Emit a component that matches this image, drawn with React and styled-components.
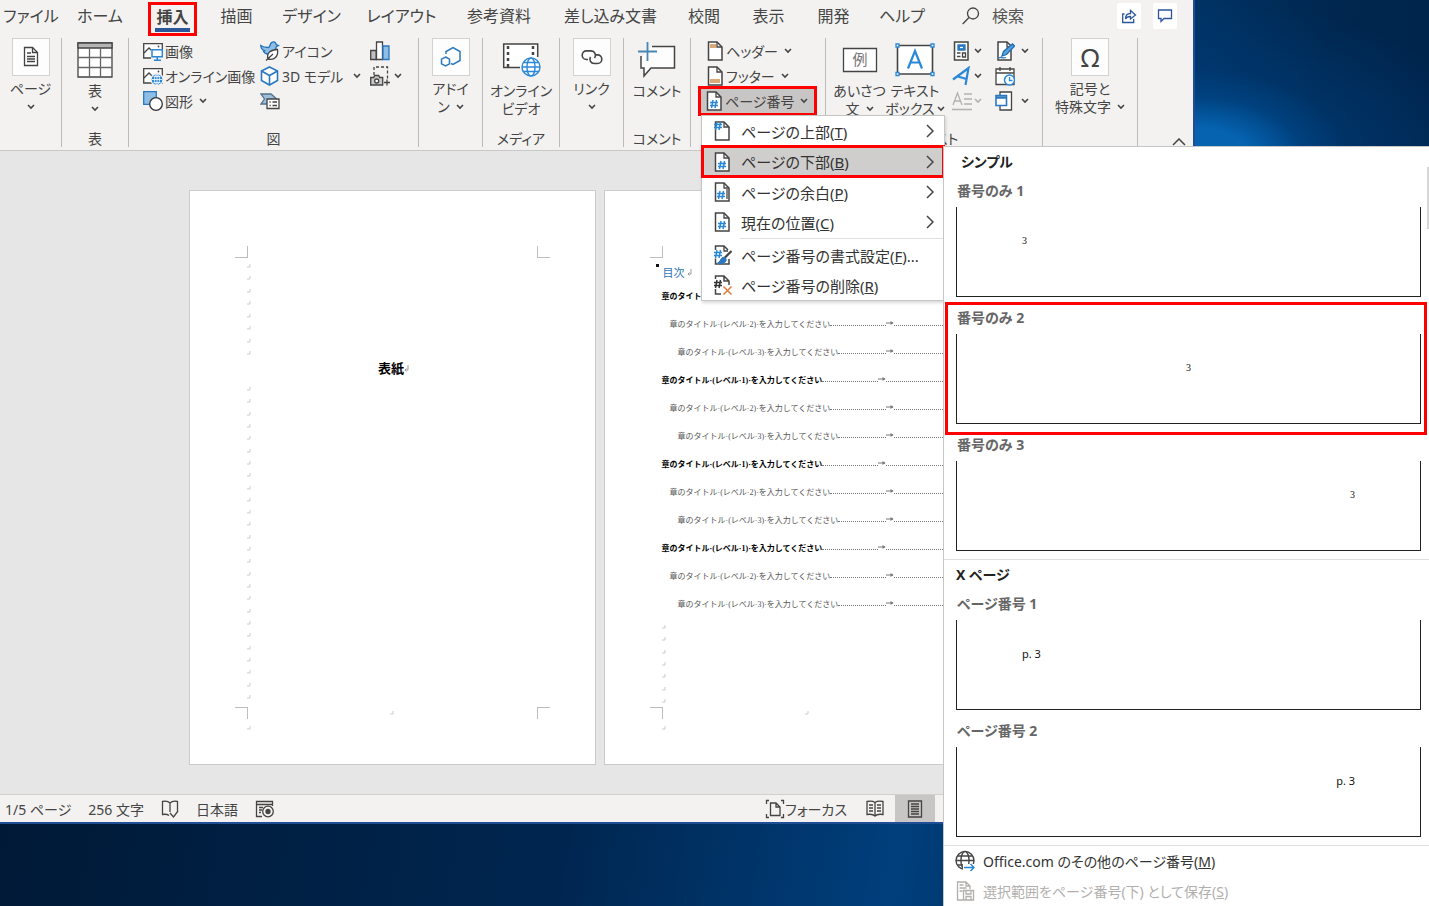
import styled, { createGlobalStyle, css } from "styled-components";

const GlobalStyle = createGlobalStyle`
  * {
    box-sizing: border-box;
  }
  body {
    margin: 0;
    font-family: "Noto Sans", "Noto Sans CJK JP", sans-serif;
    font-feature-settings: "palt";
    font-size: 14px;
    color: #444;
  }
  button,
  input {
    font: inherit;
    font-feature-settings: inherit;
    color: inherit;
    padding: 0;
    border: none;
    background: none;
  }
`;

/* ---------- desktop and window ---------- */

const Desktop = styled.div`
  position: relative;
  display: flex;
  height: 100vh;
  padding: 0 234px 82px 0;
  overflow: hidden;
  background:
    radial-gradient(ellipse 150px 90px at calc(100% - 230px) 160px, #0563b0 35%, rgba(0, 74, 140, 0.5) 70%, transparent),
    radial-gradient(ellipse 300px 170px at calc(100% - 230px) 170px, #004080, transparent),
    linear-gradient(100deg, #001630, #002650 45%, #003f7c 66%, #00274f 84%, #002148);
`;
const Window = styled.div`
  flex: 1;
  min-width: 0;
  display: flex;
  flex-direction: column;
  background-color: #f3f2f1;
  border-right: 2px solid #1f4e94;
  border-bottom: 2px solid #1f4e94;
`;

/* ---------- tabs ---------- */

const TabBar = styled.nav`
  display: flex;
  height: 34px;
`;
const Tab = styled.button`
  width: ${(props) => props.$width}px;
  height: 32px;
  font-size: 16px;
  line-height: 24px;
  white-space: nowrap;
`;
const ActiveTab = styled.button`
  width: 49px;
  height: 34px;
  margin: 2px 7px 0 10px;
  padding: 0 4px;
  border: 3px solid #f00;
  font-size: 16px;
  font-weight: 700;
  line-height: 22px;
  white-space: nowrap;
`;
const TabUnderline = styled.span`
  display: block;
  height: 4px;
  background-color: #2b579a;
`;
const Search = styled.label`
  display: flex;
  align-items: center;
  gap: 12px;
  margin-left: 24px;
  height: 32px;
`;
const SearchInput = styled.input`
  width: 90px;
  font-size: 16px;
  outline: none;
  &::placeholder {
    color: #555;
  }
`;
const WindowActions = styled.div`
  display: flex;
  gap: 12px;
  margin: 3px 16px 0 auto;
`;
const ActionButton = styled.button`
  display: flex;
  align-items: center;
  justify-content: center;
  width: 24px;
  height: 26px;
  background-color: #fff;
  border-radius: 2px;
`;

/* ---------- ribbon ---------- */

const Ribbon = styled.div`
  display: flex;
  height: 117px;
  padding-top: 4px;
  border-bottom: 1px solid #c8c8c8;
`;
const Group = styled.section`
  display: flex;
  flex-direction: column;
  flex: none;
  width: ${(props) => props.$width}px;
  height: 109px;
  border-right: 1px solid #bdbbb9;
`;
const GroupBody = styled.div`
  display: flex;
  flex: 1;
  justify-content: ${(props) => (props.$start ? "flex-start" : "center")};
  padding-left: ${(props) => props.$start || 0}px;
`;
const GroupLabel = styled.div`
  height: 16px;
  line-height: 16px;
  text-align: center;
  white-space: nowrap;
`;
const BigButton = styled.button`
  display: flex;
  flex-direction: column;
  align-items: center;
  justify-content: flex-start;
  height: 84px;
  line-height: 18px;
  white-space: nowrap;
`;
const IconTile = styled.span`
  display: flex;
  align-items: center;
  justify-content: center;
  width: 38px;
  height: 38px;
  margin-bottom: 4px;
  border: 1px solid #d4d2d0;
  background-color: #fdfdfd;
  font-size: 26px;
`;
const LargeIcon = styled.span`
  display: flex;
  align-items: center;
  justify-content: center;
  height: 44px;
`;
const Column = styled.div`
  display: flex;
  flex-direction: column;
  width: ${(props) => props.$width}px;
  padding-left: ${(props) => props.$pad || 0}px;
`;
const SmallButton = styled.button`
  display: flex;
  align-items: center;
  gap: 2px;
  height: 25px;
  white-space: nowrap;
`;
const ChevronBox = styled.span`
  display: inline-flex;
  align-items: center;
  justify-content: center;
  width: 8px;
  height: 18px;
  margin-left: ${(props) => props.$gap || 0}px;
  vertical-align: top;
`;
const Collapse = styled.button`
  align-self: flex-end;
  height: 16px;
  margin: 0 7px 3px auto;
`;
const PageNumberWrap = styled.div`
  position: relative;
`;
const PageNumberButton = styled(SmallButton)`
  height: 30px;
  margin: -2px 0 0 -8px;
  padding: 0 6px 0 4px;
  border: 3px solid #f00;
  background-color: #c8c6c4;
`;

/* ---------- page number menu ---------- */

const Menu = styled.div`
  position: absolute;
  z-index: 3;
  top: 27px;
  left: -5px;
  width: 244px;
  border: 1px solid #c6c6c6;
  background-color: #fff;
  box-shadow: 1px 2px 3px rgba(0, 0, 0, 0.15);
`;
const MenuItem = styled.button`
  display: flex;
  align-items: center;
  gap: 8px;
  width: 100%;
  height: 30px;
  padding: 0 10px 0 11px;
  font-size: 15px;
  color: #333;
  white-space: nowrap;
  text-align: left;
  ${(props) =>
    props.$active &&
    css`
      position: relative;
      height: 31px;
      background-color: #d0cecd;
      outline: 3px solid #f00;
      outline-offset: -2px;
    `}
`;
const MenuIcon = styled.span`
  display: flex;
  width: 20px;
`;
const MenuText = styled.span`
  flex: 1;
`;
const MenuDivider = styled.hr`
  height: 1px;
  margin: 1px 0 1px 38px;
  border: none;
  background-color: #e1dfdd;
`;

/* ---------- document ---------- */

const Workspace = styled.main`
  flex: 1;
  min-height: 0;
  display: flex;
  justify-content: center;
  align-items: flex-start;
  gap: 8px;
  padding: 39px 0 0 6px;
  overflow: hidden;
  background-color: #e6e6e6;
`;
const Page = styled.article`
  display: flex;
  flex-direction: column;
  flex: none;
  width: 407px;
  height: 575px;
  padding: 55px 45px 27px;
  border: 1px solid #cbcbcb;
  background-color: #fff;
  font-family: "Liberation Serif", "Noto Sans CJK JP", serif;
  font-feature-settings: normal;
  color: #222;
`;
const MarkRow = styled.div`
  display: flex;
  justify-content: space-between;
  align-items: center;
  height: 12px;
`;
const CropMark = styled.span`
  width: 13px;
  height: 12px;
  border: 0 solid #bdbdbd;
  border-${(props) => props.$v}-width: 1px;
  border-${(props) => props.$h}-width: 1px;
`;
const PageBody = styled.div`
  flex: 1;
  min-height: 0;
  padding: 6px 0 0 12px;
`;
const PageEnd = styled.div`
  display: flex;
  align-items: center;
  height: 18px;
  padding-left: 12px;
`;
const Marks = styled.div`
  display: flex;
  flex-direction: column;
  justify-content: space-between;
  height: ${(props) => props.$height}px;
`;
const CoverTitle = styled.h1`
  margin: 0 9px 0 0;
  height: 32px;
  font-size: 13px;
  font-weight: 700;
  line-height: 28px;
  text-align: center;
  color: #000;
`;
const TocTitle = styled.h2`
  display: flex;
  align-items: center;
  gap: 2px;
  margin: 0 0 0 -6px;
  height: 17px;
  font-size: 11px;
  font-weight: 400;
  line-height: 16px;
  color: #2e74b5;
`;
const Bullet = styled.span`
  align-self: flex-start;
  width: 3px;
  height: 3px;
  margin: 0 2px 0 0;
  background-color: #111;
`;
const TocRow = styled.div`
  display: flex;
  align-items: center;
  height: 28px;
  padding-left: ${(props) => (props.$level - 1) * 8}px;
  font-size: 8px;
  font-weight: ${(props) => (props.$level === 1 ? 700 : 400)};
  color: ${(props) => (props.$level === 1 ? "#000" : "#555")};
  white-space: nowrap;
`;
const Leader = styled.span`
  width: ${(props) => props.$width || "auto"};
  flex: ${(props) => (props.$width ? "none" : 1)};
  height: 5px;
  border-bottom: 1px dotted #777;
`;
const TocMarks = styled.div`
  padding-top: 8px;
`;

/* ---------- status bar ---------- */

const StatusBar = styled.footer`
  display: flex;
  align-items: center;
  height: 28px;
  padding: 0 258px 0 5px;
  border-top: 1px solid #d2d0ce;
  white-space: nowrap;
`;
const StatusButton = styled.button`
  display: flex;
  align-items: center;
  margin-right: ${(props) => (props.$tight ? 8 : 17)}px;
`;
const Spacer = styled.span`
  flex: 1;
`;
const ViewButton = styled.button`
  display: flex;
  align-items: center;
  justify-content: center;
  width: 40px;
  height: 27px;
  background-color: ${(props) => (props.$active ? "#c8c6c4" : "transparent")};
`;

/* ---------- gallery ---------- */

const Gallery = styled.aside`
  position: absolute;
  z-index: 4;
  top: 146px;
  right: 0;
  bottom: 0;
  width: 486px;
  border: 1px solid #c6c6c6;
  border-width: 1px 0 0 1px;
  background-color: #fff;
  font-size: 14px;
  overflow: hidden;
`;
const GallerySection = styled.section`
  padding: 0 3px 2px 2px;
  border-bottom: 1px solid #e1dfdd;
`;
const GalleryHeading = styled.h3`
  margin: 0;
  padding-left: ${(props) => (props.$indent ? 15 : 10)}px;
  height: 29px;
  font-size: 14px;
  font-weight: 700;
  line-height: 30px;
  color: #222;
`;
const GalleryItem = styled.button`
  display: flex;
  flex-direction: column;
  align-items: stretch;
  justify-content: flex-start;
  width: 100%;
  height: 127px;
  padding: 2px 5px 0 10px;
  text-align: left;
  ${(props) =>
    props.$active &&
    css`
      position: relative;
      height: 131px;
      margin-bottom: -4px;
      outline: 3px solid #f00;
      outline-offset: -2px;
    `}
`;
const ItemName = styled.span`
  height: 29px;
  padding-left: 1px;
  font-size: 14px;
  font-weight: 700;
  line-height: 25px;
  color: #666;
`;
const Preview = styled.span`
  display: flex;
  justify-content: ${(props) => props.$align};
  height: 90px;
  padding: 24px 65px;
  border: 1px solid #222;
  border-top: none;
  font-family: ${(props) => (props.$sans ? "inherit" : '"Liberation Serif", serif')};
  font-size: ${(props) => (props.$sans ? 11 : 10)}px;
  line-height: 20px;
  color: #111;
`;
const FooterItem = styled.button`
  display: flex;
  align-items: center;
  gap: 8px;
  height: 30px;
  padding-left: 11px;
  white-space: nowrap;
  color: #333;
  &:disabled {
    color: #b1afad;
  }
`;
const ScrollThumb = styled.span`
  position: absolute;
  top: 20px;
  right: 0;
  width: 2px;
  height: 62px;
  background-color: #d6d6d6;
`;

/* ---------- icons ---------- */

const Svg = ({ w = 20, h = w, box, children }) => (
  <svg width={w} height={h} viewBox={box || `0 0 ${w} ${h}`} fill="none" stroke="#444" strokeWidth="1.3" aria-hidden="true">
    {children}
  </svg>
);

const Chevron = ({ gap, color = "#444" }) => (
  <ChevronBox $gap={gap}>
    <Svg w={8} h={6}>
      <path d="M1 1l3 3 3-3" stroke={color} strokeWidth="1.6" />
    </Svg>
  </ChevronBox>
);

const hash = "M3 0L1.500 8M6.500 0L5 8M0 2.500h8M0 5.500h8";
const sheet = "M2.500 1h8.500l5 5v13H2.500z";

const Sheet = ({ children }) => (
  <Svg w={18} h={20}>
    <path d={sheet} fill="#fff" strokeWidth="1.500" />
    <path d="M11 1v5h5" />
    {children}
  </Svg>
);
const Hash = ({ x, y, color = "#2b88d8" }) => (
  <path d={hash} transform={`translate(${x} ${y})`} stroke={color} strokeWidth="1.500" />
);
const Globe = ({ cx, cy, r, color = "#2b88d8" }) => (
  <g stroke={color} fill="#fff" strokeWidth="1.400">
    <circle cx={cx} cy={cy} r={r} />
    <ellipse cx={cx} cy={cy} rx={r * 0.45} ry={r} />
    <path d={`M${cx - r} ${cy}h${r * 2}M${cx - r * 0.85} ${cy - r / 2}h${r * 1.7}M${cx - r * 0.85} ${cy + r / 2}h${r * 1.7}`} />
  </g>
);

const PageIcon = () => (
  <Svg w={18} h={22}>
    <path d="M2.500 1.500h8l5 5v13h-13z" fill="#fff" />
    <path d="M10.500 1.500v5h5M5 7h4M5 10.500h8M5 13h8M5 15.500h8" />
  </Svg>
);
const TableIcon = () => (
  <Svg w={36} h={36}>
    <path d="M1 1h34v34H1z" fill="#fff" />
    <path d="M1 1h34v5H1z" fill="#b5b5b5" />
    <path d="M1 15.500h34M1 25.500h34M12.500 6v29M23.500 6v29" stroke="#666" />
  </Svg>
);
const ImageIcon = ({ online }) => (
  <Svg>
    <path d="M.7 17V2.700h18.600V17z" fill="#fff" />
    <path d="M1 12l5-5 5 5" />
    <circle cx="15.500" cy="5.500" r=".9" fill="#444" stroke="none" />
    {online ? (
      <>
        <circle cx="14" cy="13.500" r="6" fill="#2b88d8" stroke="#f3f2f1" />
        <path d="M9 13.500h10M14 8.500v10M10.500 10.500h7M10.500 16.500h7" stroke="#fff" strokeWidth=".8" />
        <ellipse cx="14" cy="13.500" rx="2.500" ry="5" stroke="#fff" strokeWidth=".8" />
      </>
    ) : (
      <g stroke="#2b88d8" strokeWidth="1.500">
        <path d="M8 8v11h12V8z" fill="#f3f2f1" stroke="none" />
        <path d="M9 8.700h10.300v7H9z" fill="#fff" />
        <path d="M14.300 16v3M11 19.200h7" />
      </g>
    )}
  </Svg>
);
const ShapesIcon = () => (
  <Svg>
    <path d="M.7.7h12.600v12.600H.7z" fill="#8ebde6" stroke="#2b78c0" />
    <circle cx="13" cy="13" r="6.300" fill="#fff" stroke="#333" />
  </Svg>
);
const IconsIcon = () => (
  <Svg>
    <path d="M.7 4.500c2 1.500 4.500 2 7.800 2C10.500 6 9.500 3 11.500 1.500c2.500-1.500 4.500 0 4.700 2l2.300 1-2.300 1.300C16 11.500 11 14 7 13c-2-.5-3-1.500-3.500-2.500l1-.8C2 9 1 7 .7 4.500z" fill="#8ebde6" stroke="#2072b8" />
    <path d="M8 18c-1.500-5 1-9 9.500-9.500C18.500 15 15 19.500 8 18zM6 19.500l7-6.500" fill="#fff" />
  </Svg>
);
const CubeIcon = () => (
  <Svg>
    <path d="M9.500 1l8 4v9.500l-8 4.500-8-4.500V5z" fill="#fff" stroke="#2b78c0" strokeWidth="1.600" />
    <path d="M1.500 5l8 4.500 8-4.500M9.500 9.500V19" stroke="#2b78c0" strokeWidth="1.600" />
  </Svg>
);
const SmartArtIcon = () => (
  <Svg>
    <path d="M1 3h10l5 4.500-3 5.500H1L4.500 8z" fill="#9cc0dc" stroke="#55708a" />
    <path d="M7 8h12v9.500H7z" fill="#fff" />
    <path d="M9.500 11h1.200M12.500 11h4.500M9.500 14.500h1.200M12.500 14.500h4.500" />
  </Svg>
);
const ChartIcon = () => (
  <Svg>
    <path d="M.7 9.500h5.500v9H.7z" fill="#c0c0c0" />
    <path d="M6.500 1h6v17.500h-6z" fill="#fff" />
    <path d="M13 5h6v13.500h-6z" fill="#8ebde6" stroke="#2b78c0" />
  </Svg>
);
const ScreenshotIcon = () => (
  <Svg>
    <path d="M4 9V1h13.500v12" strokeDasharray="3 2" />
    <path d="M.7 11.500h3l1-2h4l1 2h3v7.500H.7z" fill="#c8c8c8" />
    <circle cx="6.700" cy="15" r="2" fill="#fff" />
    <path d="M14 16.500h6M17 13.500v6" />
  </Svg>
);
const AddinIcon = () => (
  <Svg w={22} h={22}>
    <path d="M6 8V5.500L13 1.500l7 4v9l-7 4-2-1" stroke="#2b78c0" strokeWidth="1.500" />
    <path d="M5.500 11l4 2.200v4.600l-4 2.200-4-2.200v-4.600z" stroke="#2b78c0" strokeWidth="1.500" />
  </Svg>
);
const VideoIcon = () => (
  <Svg w={40} h={36}>
    <path d="M19 25.500H2.700V2h34v13" strokeWidth="1.500" fill="#fff" />
    <path d="M7 4v21M32 4v10" strokeWidth="2.500" strokeDasharray="3 3" />
    <Globe cx={30} cy={25} r={9} />
  </Svg>
);
const LinkIcon = () => (
  <Svg w={22} h={16}>
    <path d="M7 10.500H5.500a4.300 4.300 0 010-8.600h4.500a4.300 4.300 0 013.500 7M9.500 8a4.300 4.300 0 004 6.500h3a4.300 4.300 0 000-8.600H15" strokeWidth="1.600" />
  </Svg>
);
const CommentIcon = () => (
  <Svg w={38} h={36}>
    <path d="M3 16v10h3v8l7-8h23.500V4.500H14L9.500 9.500z" fill="#fdfdfd" stroke="none" />
    <path d="M3 14v12h3v8l7-8h23.500V4.500H14" strokeWidth="1.500" />
    <path d="M9.500 0v19M0 9.500h19" stroke="#4a86b4" strokeWidth="1.800" />
  </Svg>
);
const GreetingIcon = () => (
  <Svg w={36} h={26}>
    <path d="M1.500 1.500h33v23h-33z" fill="#fff" />
    <text x="18" y="18" textAnchor="middle" fontSize="15" fill="#777" stroke="none">例</text>
  </Svg>
);
const TextBoxIcon = () => (
  <Svg w={40} h={34}>
    <path d="M2.500 2.500h35v28.500h-35z" fill="#fff" strokeWidth="1.600" />
    <path d="M1 1h3v3H1zM36 1h3v3h-3zM1 29.500h3v3H1zM36 29.500h3v3h-3z" fill="#fff" stroke="#2b88d8" />
    <path d="M13 25.500L20 8l7 17.500M15.500 19.500h9" stroke="#2b88d8" strokeWidth="2.200" />
  </Svg>
);
const QuickPartsIcon = () => (
  <Svg>
    <path d="M2.500 1h13.500v18H2.500z" fill="#fff" strokeWidth="1.500" />
    <path d="M6 4h7v5H6z" fill="#2b78c0" stroke="#2b78c0" />
    <path d="M8 6.500h3" stroke="#fff" />
    <path d="M5 12h3.500M5 15.500h3.500M10.500 12h3v4h-3z" />
  </Svg>
);
const WordArtIcon = () => (
  <Svg>
    <path d="M1 13.500L16.500 2l-3 17M6 10.500l8.500 2.500" stroke="#2b88d8" strokeWidth="2.200" />
  </Svg>
);
const DropCapIcon = () => (
  <Svg>
    <g stroke="#b3b1af">
      <path d="M1 14L5.500 2 10 14M2.500 10h6M12 3h8M12 8h8M12 13h8M0 18.500h20" />
    </g>
  </Svg>
);
const SignatureIcon = () => (
  <Svg>
    <path d="M3 1h9l4 4v14H3z" fill="#fff" strokeWidth="1.500" />
    <path d="M12 1v5h4" />
    <path d="M7 15l1.500-4.500 9-7.500 2 2-8 8.500z" fill="#5ba3dc" stroke="#1f6cb0" />
    <path d="M4 17c2-2 3 1 7-.5" stroke="#2b78c0" />
  </Svg>
);
const DateIcon = () => (
  <Svg>
    <path d="M1 3h18v15.500H1z" fill="#fff" />
    <path d="M1 7h18M5 1v4M15 1v4" />
    <circle cx="14.500" cy="14" r="5" fill="#fff" stroke="#2b88d8" strokeWidth="1.500" />
    <path d="M14.500 11v3.500h3" stroke="#2b88d8" />
  </Svg>
);
const ObjectIcon = () => (
  <Svg>
    <path d="M5 4V1h11.500v18H5v-4" fill="#fff" />
    <path d="M1 4.500h10.500v10H1z" fill="#fff" stroke="#2b78c0" strokeWidth="1.600" />
    <path d="M1 6.500h10.500" stroke="#2b78c0" strokeWidth="2.500" />
  </Svg>
);
const SearchIcon = () => (
  <Svg w={18} h={18}>
    <circle cx="11" cy="6.500" r="5.500" />
    <path d="M7 10.500L.7 17" />
  </Svg>
);
const ShareIcon = () => (
  <Svg w={16} h={16}>
    <g stroke="#2b579a">
      <path d="M3.500 6H1.700v8.500h11V11" />
      <path d="M4.500 11c0-4 2-5.500 5-5.500V2.500l5 4.500-5 4V8.500c-2 0-4 .5-5 2.500z" />
    </g>
  </Svg>
);
const NoteIcon = () => (
  <Svg w={16} h={16}>
    <path d="M1.500 2h13v8.500H7L4 13.500v-3H1.500z" stroke="#2b579a" />
  </Svg>
);
const ArrowIcon = () => (
  <Svg w={8} h={14}>
    <path d="M1 1l6 6-6 6" strokeWidth="1.500" />
  </Svg>
);
const BrushSheet = () => (
  <Svg w={20} h={20}>
    <path d="M2.500 13.500V19H16v-5M2.500 5V1H11l4 4" strokeWidth="1.500" />
    <path d="M11 1v5h4" />
    <Hash x={1} y={5} />
    <path d="M18.500 6L11 13.500" strokeWidth="2.200" />
    <path d="M10 12.500c2 0 3 1 3 3-2 3-5 3.500-8 2.500 3-1 2-4 5-5.500z" fill="#2b78c0" stroke="#2b78c0" />
  </Svg>
);
const RemoveSheet = () => (
  <Svg w={20} h={20}>
    <path d="M2.500 14v5H8M2.500 4V1H11l5 5v4M11 1v5h5" strokeWidth="1.500" />
    <Hash x={1} y={5} color="#333" />
    <path d="M10.500 11.500l8 8M18.500 11.500l-8 8" stroke="#e07b39" strokeWidth="1.500" />
  </Svg>
);
const ProofIcon = () => (
  <Svg w={18} h={18}>
    <path d="M9 3C7 1 4 1 1.500 1.500v13C4 14 6 14 8 15.500M9 3c2-2 5-2 7.500-1.500V11M9 3v9M9 13l3.500 4L17 11" />
  </Svg>
);
const MacroIcon = () => (
  <Svg w={20} h={18}>
    <path d="M7 16.500H1.500v-15h16V6M1.500 4.500h16M4 7.500h4M4 10h3M4 12.500h2" />
    <circle cx="13" cy="11.500" r="5.300" />
    <circle cx="13" cy="11.500" r="2" fill="#444" />
  </Svg>
);
const FocusIcon = () => (
  <Svg w={20} h={20}>
    <path d="M4 1.500H1.500V5M16 1.500h2.500V5M4 18.500H1.500V15M16 18.500h2.500V15M5.500 4h5.500l4 4v8.500H5.500zM11 4v4h4" />
  </Svg>
);
const BookIcon = () => (
  <Svg w={18} h={18}>
    <path d="M9 2.500C7 1 4 1 1 1.500v13c3-.5 6-.5 8 1.500 2-2 5-2 8-1.500v-13c-3-.5-6-.5-8 1zM9 2.500V16M3 5h4M3 8h4M3 11h4M11 5h4M11 8h4M11 11h4" />
  </Svg>
);
const LayoutIcon = () => (
  <Svg w={16} h={18}>
    <path d="M1.500 1h13v16h-13zM4 4h8M4 6.500h8M4 9h8M4 11.500h8M4 14h8" />
  </Svg>
);
const OfficeIcon = () => (
  <Svg w={20} h={22}>
    <Globe cx={10} cy={10.5} r={9} color="#444" />
    <path d="M8 14h12v8H8z" fill="#fff" stroke="none" />
    <path d="M9 17.500h10M15.500 14l3.500 3.500-3.500 3.500" stroke="#2b88d8" strokeWidth="1.500" />
  </Svg>
);
const SaveSheet = () => (
  <Svg w={20} h={20}>
    <g stroke="#b1afad">
      <path d="M8 19H2.500V1H11l4 4v3M11 1v4h4M4.500 4h4M4.500 7h7M4.500 10h3" />
      <path d="M8.500 9.500h10v9.500h-10zM11 9.500v3.500h5V9.500M11 19v-3.500h5V19" />
    </g>
  </Svg>
);
const TabArrow = () => (
  <Svg w={8} h={6}>
    <path d="M0 3h7" stroke="#777" strokeWidth="1" />
    <path d="M4.500 1l3 2-3 2z" fill="#777" stroke="none" />
  </Svg>
);

/* ---------- data ---------- */

const leftTabs = [
  ["ファイル", 62],
  ["ホーム", 76],
];
const rightTabs = [
  ["描画", 65],
  ["デザイン", 85],
  ["レイアウト", 95],
  ["参考資料", 100],
  ["差し込み文書", 123],
  ["校閲", 64],
  ["表示", 65],
  ["開発", 65],
  ["ヘルプ", 72],
];

const tocLevels = [1, 2, 3, 1, 2, 3, 1, 2, 3, 1, 2, 3];

const menuItems = [
  { icon: <Sheet><Hash x={1} y={1} /></Sheet>, text: "ページの上部", hotkey: "T" },
  { icon: <Sheet><Hash x={5} y={9} /></Sheet>, text: "ページの下部", hotkey: "B", active: true },
  { icon: <Sheet><Hash x={4} y={9} /><path d="M14 7v10" /></Sheet>, text: "ページの余白", hotkey: "P" },
  { icon: <Sheet><Hash x={5} y={9} /></Sheet>, text: "現在の位置", hotkey: "C" },
];

const sections = [
  {
    title: "シンプル",
    indent: true,
    items: [
      { name: "番号のみ 1", align: "flex-start", text: "3" },
      { name: "番号のみ 2", align: "center", text: "3", active: true },
      { name: "番号のみ 3", align: "flex-end", text: "3" },
    ],
  },
  {
    title: "X ページ",
    items: [
      { name: "ページ番号 1", align: "flex-start", text: "p. 3", sans: true },
      { name: "ページ番号 2", align: "flex-end", text: "p. 3", sans: true },
    ],
  },
];

/* ---------- parts ---------- */

const ParagraphMark = () => (
  <Svg w={4} h={4}>
    <path d="M3 0v3H0" stroke="#ccc" strokeWidth="1" />
  </Svg>
);

const ParagraphMarks = ({ count, height }) => (
  <Marks $height={height}>
    {Array.from({ length: count }, (_, i) => (
      <ParagraphMark key={i} />
    ))}
  </Marks>
);

const ReturnMark = () => (
  <Svg w={5} h={8}>
    <path d="M4 0v5H1M2.500 3.500L1 5l1.500 1.500" stroke="#888" strokeWidth=".8" />
  </Svg>
);

const PageNumberMenu = () => (
  <Menu>
    {menuItems.map((item) => (
      <MenuItem key={item.hotkey} $active={item.active}>
        <MenuIcon>{item.icon}</MenuIcon>
        <MenuText>
          {item.text}(<u>{item.hotkey}</u>)
        </MenuText>
        <ArrowIcon />
      </MenuItem>
    ))}
    <MenuDivider />
    <MenuItem>
      <MenuIcon><BrushSheet /></MenuIcon>
      <MenuText>
        ページ番号の書式設定(<u>F</u>)...
      </MenuText>
    </MenuItem>
    <MenuItem>
      <MenuIcon><RemoveSheet /></MenuIcon>
      <MenuText>
        ページ番号の削除(<u>R</u>)
      </MenuText>
    </MenuItem>
  </Menu>
);

const InsertRibbon = () => (
  <Ribbon>
    <Group $width={62}>
      <GroupBody>
        <BigButton>
          <IconTile><PageIcon /></IconTile>
          ページ
          <Chevron />
        </BigButton>
      </GroupBody>
    </Group>
    <Group $width={67}>
      <GroupBody>
        <BigButton>
          <LargeIcon><TableIcon /></LargeIcon>
          表
          <Chevron />
        </BigButton>
      </GroupBody>
      <GroupLabel>表</GroupLabel>
    </Group>
    <Group $width={290}>
      <GroupBody $start={14}>
        <Column $width={117}>
          <SmallButton><ImageIcon />画像</SmallButton>
          <SmallButton><ImageIcon online />オンライン画像</SmallButton>
          <SmallButton><ShapesIcon />図形<Chevron gap={4} /></SmallButton>
        </Column>
        <Column $width={110}>
          <SmallButton><IconsIcon />アイコン</SmallButton>
          <SmallButton><CubeIcon />3D モデル<Chevron gap={8} /></SmallButton>
          <SmallButton aria-label="SmartArt"><SmartArtIcon /></SmallButton>
        </Column>
        <Column $width={40}>
          <SmallButton aria-label="グラフ"><ChartIcon /></SmallButton>
          <SmallButton aria-label="スクリーンショット"><ScreenshotIcon /><Chevron gap={2} /></SmallButton>
        </Column>
      </GroupBody>
      <GroupLabel>図</GroupLabel>
    </Group>
    <Group $width={64}>
      <GroupBody>
        <BigButton>
          <IconTile><AddinIcon /></IconTile>
          アドイ
          <span>ン<Chevron gap={6} /></span>
        </BigButton>
      </GroupBody>
    </Group>
    <Group $width={77}>
      <GroupBody>
        <BigButton>
          <LargeIcon><VideoIcon /></LargeIcon>
          <span>オンライン</span>
          <span>ビデオ</span>
        </BigButton>
      </GroupBody>
      <GroupLabel>メディア</GroupLabel>
    </Group>
    <Group $width={64}>
      <GroupBody>
        <BigButton>
          <IconTile><LinkIcon /></IconTile>
          リンク
          <Chevron />
        </BigButton>
      </GroupBody>
    </Group>
    <Group $width={67}>
      <GroupBody>
        <BigButton>
          <LargeIcon><CommentIcon /></LargeIcon>
          コメント
        </BigButton>
      </GroupBody>
      <GroupLabel>コメント</GroupLabel>
    </Group>
    <Group $width={135}>
      <GroupBody $start={15}>
        <Column $width={118}>
          <SmallButton>
            <Sheet><path d="M4 3h6v4H4z" fill="#dba878" stroke="none" /></Sheet>
            ヘッダー<Chevron gap={4} />
          </SmallButton>
          <SmallButton>
            <Sheet><path d="M4 13h10v4H4z" fill="#dba878" stroke="none" /></Sheet>
            フッター<Chevron gap={4} />
          </SmallButton>
          <PageNumberWrap>
            <PageNumberButton>
              <Sheet><Hash x={5} y={9} /></Sheet>
              ページ番号<Chevron gap={4} />
            </PageNumberButton>
            <PageNumberMenu />
          </PageNumberWrap>
        </Column>
      </GroupBody>
    </Group>
    <Group $width={217}>
      <GroupBody $start={6}>
        <Column $width={55}>
          <BigButton>
            <LargeIcon><GreetingIcon /></LargeIcon>
            <span>あいさつ</span>
            <span>文<Chevron gap={6} /></span>
          </BigButton>
        </Column>
        <Column $width={56}>
          <BigButton>
            <LargeIcon><TextBoxIcon /></LargeIcon>
            <span>テキスト</span>
            <span>ボックス<Chevron gap={2} /></span>
          </BigButton>
        </Column>
        <Column $width={52} $pad={9}>
          <SmallButton aria-label="クイック パーツ"><QuickPartsIcon /><Chevron /></SmallButton>
          <SmallButton aria-label="ワードアート"><WordArtIcon /><Chevron /></SmallButton>
          <SmallButton aria-label="ドロップ キャップ"><DropCapIcon /><Chevron color="#b3b1af" /></SmallButton>
        </Column>
        <Column $width={40}>
          <SmallButton aria-label="署名欄"><SignatureIcon /><Chevron gap={4} /></SmallButton>
          <SmallButton aria-label="日付と時刻"><DateIcon /></SmallButton>
          <SmallButton aria-label="オブジェクト"><ObjectIcon /><Chevron gap={4} /></SmallButton>
        </Column>
      </GroupBody>
      <GroupLabel>テキスト</GroupLabel>
    </Group>
    <Group $width={95}>
      <GroupBody>
        <BigButton>
          <IconTile>Ω</IconTile>
          <span>記号と</span>
          <span>特殊文字<Chevron gap={6} /></span>
        </BigButton>
      </GroupBody>
    </Group>
    <Collapse aria-label="リボンを折りたたむ">
      <Svg w={14} h={8}>
        <path d="M1 7l6-6 6 6" strokeWidth="1.500" />
      </Svg>
    </Collapse>
  </Ribbon>
);

const PageFoot = () => (
  <>
    <MarkRow>
      <CropMark $v="top" $h="right" />
      <ParagraphMark />
      <CropMark $v="top" $h="left" />
    </MarkRow>
    <PageEnd>
      <ParagraphMark />
    </PageEnd>
  </>
);

const CoverPage = () => (
  <Page>
    <MarkRow>
      <CropMark $v="bottom" $h="right" />
      <CropMark $v="bottom" $h="left" />
    </MarkRow>
    <PageBody>
      <ParagraphMarks count={8} height={91} />
      <CoverTitle>表紙<ReturnMark /></CoverTitle>
      <ParagraphMarks count={26} height={312} />
    </PageBody>
    <PageFoot />
  </Page>
);

const TocPage = () => (
  <Page>
    <MarkRow>
      <CropMark $v="bottom" $h="right" />
      <CropMark $v="bottom" $h="left" />
    </MarkRow>
    <PageBody>
      <TocTitle><Bullet />目次<ReturnMark /></TocTitle>
      {tocLevels.map((level, i) => (
        <TocRow key={i} $level={level}>
          章のタイトル·(レベル·{level})·を入力してください
          <Leader $width={level === 3 ? "48px" : "56px"} />
          <TabArrow />
          <Leader />
        </TocRow>
      ))}
      <TocMarks>
        <ParagraphMarks count={7} height={78} />
      </TocMarks>
    </PageBody>
    <PageFoot />
  </Page>
);

const PageNumberGallery = () => (
  <Gallery>
    {sections.map((section) => (
      <GallerySection key={section.title}>
        <GalleryHeading $indent={section.indent}>{section.title}</GalleryHeading>
        {section.items.map((item) => (
          <GalleryItem key={item.name} $active={item.active}>
            <ItemName>{item.name}</ItemName>
            <Preview $align={item.align} $sans={item.sans}>{item.text}</Preview>
          </GalleryItem>
        ))}
      </GallerySection>
    ))}
    <FooterItem>
      <OfficeIcon />
      <span>Office.com のその他のページ番号(<u>M</u>)</span>
    </FooterItem>
    <FooterItem disabled>
      <SaveSheet />
      <span>選択範囲をページ番号(下) として保存(<u>S</u>)</span>
    </FooterItem>
    <ScrollThumb />
  </Gallery>
);

const App = () => {
  return (
    <Desktop>
      <GlobalStyle />
      <Window>
        <TabBar>
          {leftTabs.map(([name, width]) => (
            <Tab key={name} $width={width}>{name}</Tab>
          ))}
          <ActiveTab>
            挿入
            <TabUnderline />
          </ActiveTab>
          {rightTabs.map(([name, width]) => (
            <Tab key={name} $width={width}>{name}</Tab>
          ))}
          <Search>
            <SearchIcon />
            <SearchInput type="text" placeholder="検索" aria-label="検索" />
          </Search>
          <WindowActions>
            <ActionButton aria-label="共有"><ShareIcon /></ActionButton>
            <ActionButton aria-label="コメント"><NoteIcon /></ActionButton>
          </WindowActions>
        </TabBar>
        <InsertRibbon />
        <Workspace>
          <CoverPage />
          <TocPage />
        </Workspace>
        <StatusBar>
          <StatusButton>1/5 ページ</StatusButton>
          <StatusButton>256 文字</StatusButton>
          <StatusButton aria-label="文章校正"><ProofIcon /></StatusButton>
          <StatusButton>日本語</StatusButton>
          <StatusButton aria-label="マクロの記録"><MacroIcon /></StatusButton>
          <Spacer />
          <StatusButton $tight><FocusIcon />フォーカス</StatusButton>
          <ViewButton aria-label="閲覧モード"><BookIcon /></ViewButton>
          <ViewButton $active aria-label="印刷レイアウト"><LayoutIcon /></ViewButton>
        </StatusBar>
      </Window>
      <PageNumberGallery />
    </Desktop>
  );
};

export default App;
